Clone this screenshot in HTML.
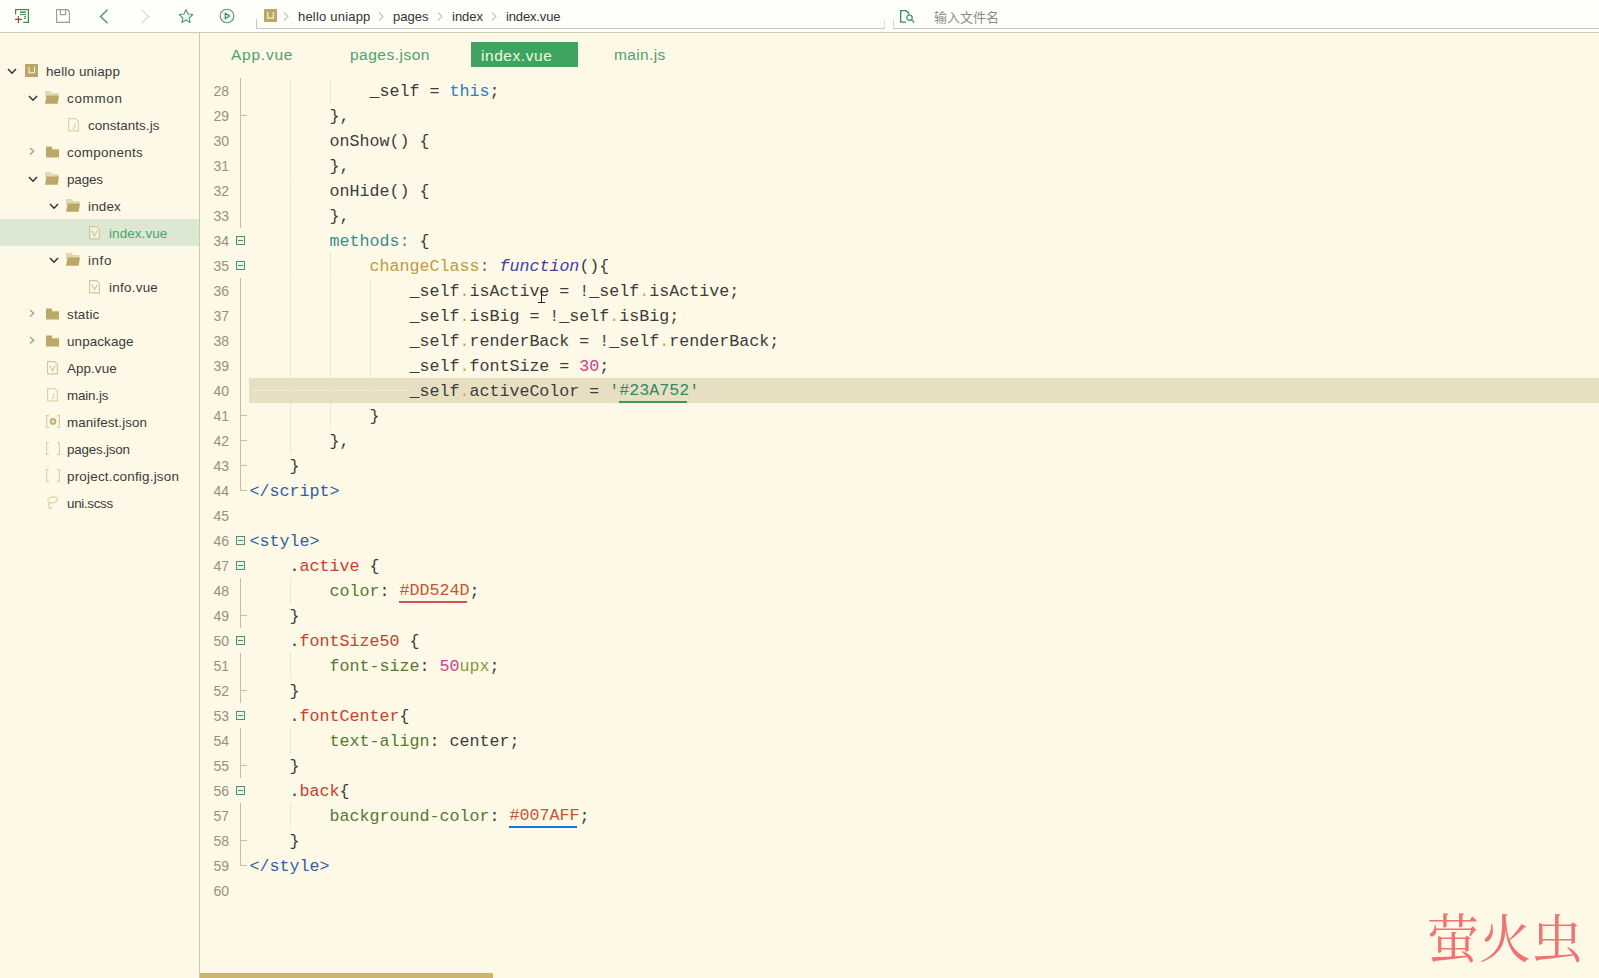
<!DOCTYPE html>
<html lang="zh">
<head>
<meta charset="utf-8">
<title>index.vue - HBuilder X</title>
<style>
*{box-sizing:border-box;margin:0;padding:0}
html,body{width:1599px;height:978px;overflow:hidden;background:#fef8e6}
body{position:relative;font-family:"Liberation Sans","Noto Sans CJK SC",sans-serif;color:#3b3b3b}
#tb{position:absolute;left:0;top:0;width:1599px;height:33px;background:#fefefa;border-bottom:1px solid #d3ccaa}
#tb svg{position:absolute}
#bc{position:absolute;left:256px;top:19px;width:629px;height:10px;border-left:1px solid #cac9c0;border-bottom:1px solid #cac9c0;border-right:1px solid #e4e0d0}
#bc2{position:absolute;left:893px;top:19px;width:706px;height:10px;border-left:1px solid #dcd8c8;border-bottom:1px solid #cac9c0}
.bt{position:absolute;top:8px;font-size:13px;line-height:17px;color:#333;white-space:nowrap}
.bs{position:absolute;top:12px}
#ph{position:absolute;left:934px;top:9px;font-size:13px;line-height:17px;color:#8c8c8c;white-space:nowrap}
#side{position:absolute;left:0;top:33px;width:200px;height:945px;background:#fef8e6;border-right:1px solid #cfc8ae}
.row{position:absolute;left:0;width:199px;height:27px}
.row.sel{background:#dce8d3}
.row.sel .lb{color:#4aa267}
.row .lb{position:absolute;top:5px;font-size:13.4px;line-height:19px;color:#3b3b3b;white-space:nowrap}
.row .ic{position:absolute;top:7px}
.row .ar{position:absolute;top:10.5px}
.row .ar.r{top:9px}
#ed{position:absolute;left:200px;top:33px;width:1399px;height:945px;background:#fef8e6}
.tab{position:absolute;top:42px;height:25px;font-size:15.5px;line-height:25px;color:#4fa06f;white-space:nowrap}
.tab.on{background:#3fa461;color:#ecfbdc;width:107px;left:471px;padding-left:10px;line-height:27px}
.ln{position:absolute;left:200px;width:1399px;height:25px}
.ln.hl:before{content:"";position:absolute;left:49px;top:0;width:1350px;height:25px;background:#e8dfc3}
.no{position:absolute;left:0;width:29px;top:0;text-align:right;font-size:14px;line-height:26px;color:#989179}
.cd{position:absolute;left:49.5px;top:2px;font-family:"Liberation Mono","DejaVu Sans Mono",monospace;font-size:16.667px;line-height:24px;white-space:pre;color:#3d3d3d}
.g{position:absolute;top:0;width:0;height:25px;border-left:1px dotted #ddd7c4}
.fb{position:absolute;left:36px;top:8px;width:9px;height:9px;border:1px solid #5a8a6c;background:#e8faee}
.fb:after{content:"";position:absolute;left:1px;top:3px;width:5px;height:1px;background:#4c8a64}
.fl{position:absolute;left:40px;top:0;width:1px;height:25px;background:#c4bea6}
.fl.e:after{content:"";position:absolute;left:1px;top:12px;width:6px;height:1px;background:#c4bea6}
.fl.l{height:13px}
.fl.l:after{content:"";position:absolute;left:1px;top:12px;width:6px;height:1px;background:#c4bea6}
.kw{color:#2b7fc2}.pr{color:#388e8e}.co{color:#4a86b8}.co2{color:#5a6f8f}.fn{color:#c19a3b}
.it{color:#3c40a8;font-style:italic}.dot{color:#c9a93e}.num{color:#c9428a}.q{color:#3f8060}
.c1{color:#2f8a68;background:linear-gradient(#3c9a58,#3c9a58) 0 100%/calc(100% - 2px) 2px no-repeat}
.c2{color:#c8552e;background:linear-gradient(#cf5650,#cf5650) 0 100%/calc(100% - 2px) 2px no-repeat}
.c3{color:#c8552e;background:linear-gradient(#1a76dc,#1a76dc) 0 100%/calc(100% - 2px) 2px no-repeat}
.c1,.c2,.c3{display:inline-block;line-height:21px;height:23px;vertical-align:top}
.tag{color:#2f5fa6}.sel{color:#c6412b}.prop{color:#527a34}.unit{color:#8a983a}
#wm{position:absolute;left:1427px;top:906px;font-family:"Liberation Serif","Noto Serif CJK SC",serif;font-size:52px;line-height:70px;color:#f07373;white-space:nowrap;letter-spacing:0px}
.ws{position:absolute;top:12px;height:1px;width:37px;background:#f3ecd6}
#ib{position:absolute;left:541px;top:291px;width:1px;height:11px;background:#222}
#ib:after{content:"";position:absolute;left:-3px;top:11px;width:7px;height:1px;background:#222}
#sb{position:absolute;left:200px;top:973px;width:293px;height:5px;background:#ceb56c}
</style>
</head>
<body>
<div id="tb">
<svg style="left:15px;top:9px" width="14" height="14" viewBox="0 0 14 14"><path d="M.6 5.600V.6h12.800v12.800H8.200" fill="none" stroke="#3f8a5a" stroke-width="1.200"/><path d="M5 3.200h6" stroke="#3f8a5a" stroke-width="1.500"/><path d="M5 5.600h6M9 7.700h2M9 9.500h2" stroke="#3f8a5a" stroke-width="1"/><path d="M-.2 10.400h7M3.400 7.300v6.600" stroke="#a3403c" stroke-width="1.200"/></svg>
<svg style="left:56px;top:9px" width="14" height="14" viewBox="0 0 14 14"><path d="M.6.600h11l1.800 2.200v10.600H.6z" fill="none" stroke="#9a9a9a" stroke-width="1.100"/><path d="M4.400.600v5h5.200v-5" fill="none" stroke="#9a9a9a" stroke-width="1.100"/></svg>
<svg style="left:99px;top:9px" width="10" height="15" viewBox="0 0 10 15"><path d="M8.500.800L1.500 7.500l7 6.700" fill="none" stroke="#55906c" stroke-width="1.400"/></svg>
<svg style="left:140px;top:9px" width="10" height="15" viewBox="0 0 10 15"><path d="M1.500.800l7 6.700-7 6.700" fill="none" stroke="#dcdcdc" stroke-width="1.400"/></svg>
<svg style="left:178px;top:8px" width="16" height="16" viewBox="0 0 16 16"><path d="M8 1.500l2 4.500 4.800.5-3.600 3.300 1 4.700L8 12.100 3.800 14.500l1-4.700L1.200 6.500 6 6z" fill="#eafaf1" stroke="#5a9570" stroke-width="1.100" stroke-linejoin="round"/></svg>
<svg style="left:219px;top:8px" width="16" height="16" viewBox="0 0 16 16"><circle cx="8" cy="8" r="6.800" fill="#effbf4" stroke="#5a9570" stroke-width="1.100"/><path d="M6.300 5.300v5.400L10.600 8z" fill="none" stroke="#3f8a5a" stroke-width="1.200" stroke-linejoin="round"/></svg>
<div id="bc"></div><div id="bc2"></div>
<svg style="left:264px;top:9px" width="13" height="13" viewBox="0 0 13 13"><rect width="13" height="13" fill="#b9a66b"/><path d="M3.700 3v6.200h5.600V3" fill="none" stroke="#fff3b8" stroke-width="1.200"/></svg>
<svg class="bs" style="left:283px" width="6" height="9" viewBox="0 0 6 9"><path d="M1 .500l4 4-4 4" fill="none" stroke="#c4c4c4" stroke-width="1.100"/></svg>
<span class="bt" style="left:298px;letter-spacing:.2px">hello uniapp</span>
<svg class="bs" style="left:378px" width="6" height="9" viewBox="0 0 6 9"><path d="M1 .500l4 4-4 4" fill="none" stroke="#c4c4c4" stroke-width="1.100"/></svg>
<span class="bt" style="left:393px">pages</span>
<svg class="bs" style="left:437px" width="6" height="9" viewBox="0 0 6 9"><path d="M1 .500l4 4-4 4" fill="none" stroke="#c4c4c4" stroke-width="1.100"/></svg>
<span class="bt" style="left:452px">index</span>
<svg class="bs" style="left:491px" width="6" height="9" viewBox="0 0 6 9"><path d="M1 .500l4 4-4 4" fill="none" stroke="#c4c4c4" stroke-width="1.100"/></svg>
<span class="bt" style="left:506px;letter-spacing:-.15px">index.vue</span>
<svg style="left:900px;top:10px" width="15" height="14" viewBox="0 0 15 14"><path d="M6 12.200H.7V.7h5.500l2.400 2.400v1.700" fill="none" stroke="#2f8f5b" stroke-width="1.300"/><circle cx="9.500" cy="7.700" r="2.700" fill="none" stroke="#2f8f5b" stroke-width="1.200"/><path d="M11.500 9.700l2.800 3" stroke="#2f8f5b" stroke-width="1.200"/></svg>
<span id="ph">输入文件名</span>
</div>
<div id="side">
</div>
<div id="ed"></div>
<div style="position:absolute;left:0;top:0;width:199px;height:978px">
<div class="row" style="top:57px"><svg style="left:7px" class="ar" width="10" height="7" viewBox="0 0 10 7"><path d="M1 1l4 4.200 4-4.200" fill="none" stroke="#333" stroke-width="1.5"/></svg><svg class="ic" style="left:25px;top:7px" width="13" height="13" viewBox="0 0 13 13"><rect width="13" height="13" fill="#b9a668"/><path d="M4 3v5.800h5.500V3" fill="none" stroke="#fff5c4" stroke-width="1.100"/></svg><span class="lb" style="left:46px;letter-spacing:0.15px">hello uniapp</span></div>
<div class="row" style="top:84px"><svg style="left:28px" class="ar" width="10" height="7" viewBox="0 0 10 7"><path d="M1 1l4 4.200 4-4.200" fill="none" stroke="#333" stroke-width="1.5"/></svg><svg class="ic" style="left:45px;top:7px" width="14" height="13" viewBox="0 0 14 13"><path d="M0 0h6l.8 2h6.700v4H0z" fill="#e3d8b4"/><path d="M0 12.800L1.600 4.600H14l-1.300 8.200z" fill="#bba869"/></svg><span class="lb" style="left:67px;letter-spacing:0.72px">common</span></div>
<div class="row" style="top:111px"><svg class="ic" style="left:68px;top:7px" width="11" height="14" viewBox="0 0 11 14"><path d="M.6 .6h7L10.400 3.400v9.500H.6z" fill="#fffbee" fill-opacity=".55" stroke="#ddd1a8" stroke-width="1.200"/><path d="M6.800 5v4q0 1.300-1.300 1.300H4" fill="none" stroke="#ddd1a8" stroke-width="1.100"/></svg><span class="lb" style="left:88px;letter-spacing:0.06px">constants.js</span></div>
<div class="row" style="top:138px"><svg style="left:29px" class="ar r" width="7" height="9" viewBox="0 0 7 9"><path d="M1 1l3.700 3.300L1 7.600" fill="none" stroke="#a89f88" stroke-width="1.300"/></svg><svg class="ic" style="left:46px;top:8px" width="13" height="12" viewBox="0 0 13 12"><path d="M0 .500h6v2.500h7v8.500H0z" fill="#bba869"/><path d="M6.300 3.400H13" stroke="#dccf9f" stroke-width=".8"/></svg><span class="lb" style="left:67px;letter-spacing:0.30px">components</span></div>
<div class="row" style="top:165px"><svg style="left:28px" class="ar" width="10" height="7" viewBox="0 0 10 7"><path d="M1 1l4 4.200 4-4.200" fill="none" stroke="#333" stroke-width="1.5"/></svg><svg class="ic" style="left:45px;top:7px" width="14" height="13" viewBox="0 0 14 13"><path d="M0 0h6l.8 2h6.700v4H0z" fill="#e3d8b4"/><path d="M0 12.800L1.600 4.600H14l-1.300 8.200z" fill="#bba869"/></svg><span class="lb" style="left:67px;letter-spacing:-0.11px">pages</span></div>
<div class="row" style="top:192px"><svg style="left:49px" class="ar" width="10" height="7" viewBox="0 0 10 7"><path d="M1 1l4 4.200 4-4.200" fill="none" stroke="#333" stroke-width="1.5"/></svg><svg class="ic" style="left:66px;top:7px" width="14" height="13" viewBox="0 0 14 13"><path d="M0 0h6l.8 2h6.700v4H0z" fill="#e3d8b4"/><path d="M0 12.800L1.600 4.600H14l-1.300 8.200z" fill="#bba869"/></svg><span class="lb" style="left:88px;letter-spacing:0.20px">index</span></div>
<div class="row sel" style="top:219px"><svg class="ic" style="left:89px;top:7px" width="11" height="14" viewBox="0 0 11 14"><path d="M.6 .6h7L10.400 3.400v9.500H.6z" fill="#fffbee" fill-opacity=".55" stroke="#d3c595" stroke-width="1.200"/><path d="M2.800 4.500l2.700 5.500 2.700-5.500" fill="none" stroke="#d3c595" stroke-width="1.100"/></svg><span class="lb" style="left:109px;letter-spacing:0.12px">index.vue</span></div>
<div class="row" style="top:246px"><svg style="left:49px" class="ar" width="10" height="7" viewBox="0 0 10 7"><path d="M1 1l4 4.200 4-4.200" fill="none" stroke="#333" stroke-width="1.5"/></svg><svg class="ic" style="left:66px;top:7px" width="14" height="13" viewBox="0 0 14 13"><path d="M0 0h6l.8 2h6.700v4H0z" fill="#e3d8b4"/><path d="M0 12.800L1.600 4.600H14l-1.300 8.200z" fill="#bba869"/></svg><span class="lb" style="left:88px;letter-spacing:0.60px">info</span></div>
<div class="row" style="top:273px"><svg class="ic" style="left:89px;top:7px" width="11" height="14" viewBox="0 0 11 14"><path d="M.6 .6h7L10.400 3.400v9.500H.6z" fill="#fffbee" fill-opacity=".55" stroke="#d3c595" stroke-width="1.200"/><path d="M2.800 4.500l2.700 5.500 2.700-5.500" fill="none" stroke="#d3c595" stroke-width="1.100"/></svg><span class="lb" style="left:109px;letter-spacing:0.27px">info.vue</span></div>
<div class="row" style="top:300px"><svg style="left:29px" class="ar r" width="7" height="9" viewBox="0 0 7 9"><path d="M1 1l3.700 3.300L1 7.600" fill="none" stroke="#a89f88" stroke-width="1.300"/></svg><svg class="ic" style="left:46px;top:8px" width="13" height="12" viewBox="0 0 13 12"><path d="M0 .500h6v2.500h7v8.500H0z" fill="#bba869"/><path d="M6.300 3.400H13" stroke="#dccf9f" stroke-width=".8"/></svg><span class="lb" style="left:67px;letter-spacing:0.20px">static</span></div>
<div class="row" style="top:327px"><svg style="left:29px" class="ar r" width="7" height="9" viewBox="0 0 7 9"><path d="M1 1l3.700 3.300L1 7.600" fill="none" stroke="#a89f88" stroke-width="1.300"/></svg><svg class="ic" style="left:46px;top:8px" width="13" height="12" viewBox="0 0 13 12"><path d="M0 .500h6v2.500h7v8.500H0z" fill="#bba869"/><path d="M6.300 3.400H13" stroke="#dccf9f" stroke-width=".8"/></svg><span class="lb" style="left:67px;letter-spacing:0.12px">unpackage</span></div>
<div class="row" style="top:354px"><svg class="ic" style="left:47px;top:7px" width="11" height="14" viewBox="0 0 11 14"><path d="M.6 .6h7L10.400 3.400v9.500H.6z" fill="#fffbee" fill-opacity=".55" stroke="#d3c595" stroke-width="1.200"/><path d="M2.800 4.500l2.700 5.500 2.700-5.500" fill="none" stroke="#d3c595" stroke-width="1.100"/></svg><span class="lb" style="left:67px;letter-spacing:0.08px">App.vue</span></div>
<div class="row" style="top:381px"><svg class="ic" style="left:47px;top:7px" width="11" height="14" viewBox="0 0 11 14"><path d="M.6 .6h7L10.400 3.400v9.500H.6z" fill="#fffbee" fill-opacity=".55" stroke="#ddd1a8" stroke-width="1.200"/><path d="M6.800 5v4q0 1.300-1.300 1.300H4" fill="none" stroke="#ddd1a8" stroke-width="1.100"/></svg><span class="lb" style="left:67px;letter-spacing:-0.17px">main.js</span></div>
<div class="row" style="top:408px"><svg class="ic" style="left:46px;top:7px" width="14" height="13" viewBox="0 0 14 13"><path d="M3 .600H.6v11.800H3M11 .600h2.400v11.800H11" fill="none" stroke="#d9cda3" stroke-width="1.200"/><circle cx="7" cy="6.500" r="2.300" fill="#fff8e0" stroke="#c4b274" stroke-width="2.200"/></svg><span class="lb" style="left:67px;letter-spacing:0.09px">manifest.json</span></div>
<div class="row" style="top:435px"><svg class="ic" style="left:46px;top:7px" width="14" height="13" viewBox="0 0 14 13"><path d="M3 .600H.6v11.800H3M11 .600h2.400v11.800H11" fill="none" stroke="#ddd2ab" stroke-width="1.200"/></svg><span class="lb" style="left:67px;letter-spacing:-0.20px">pages.json</span></div>
<div class="row" style="top:462px"><svg class="ic" style="left:46px;top:7px" width="14" height="13" viewBox="0 0 14 13"><path d="M3 .600H.6v11.800H3M11 .600h2.400v11.800H11" fill="none" stroke="#ddd2ab" stroke-width="1.200"/></svg><span class="lb" style="left:67px;letter-spacing:0.22px">project.config.json</span></div>
<div class="row" style="top:489px"><svg class="ic" style="left:46px;top:7px" width="13" height="14" viewBox="0 0 13 14"><path d="M5.200 7.200C1.500 7.400.6 4 3.800 2S12 .8 11.500 3.400 7.800 7 5.200 7.200C3.200 7.600 2 9.300 2.600 11.200s3.400 1.300 2.600-.8" fill="none" stroke="#ddd2ab" stroke-width="1.200"/></svg><span class="lb" style="left:67px;letter-spacing:-0.32px">uni.scss</span></div>
</div>
<span class="tab" style="left:231px;letter-spacing:.75px">App.vue</span>
<span class="tab" style="left:350px;letter-spacing:.5px">pages.json</span>
<span class="tab on" style="letter-spacing:.55px">index.vue</span>
<span class="tab" style="left:614px;letter-spacing:.35px">main.js</span>
<div class="ln" style="top:78px"><span class="no">28</span><i class="fl v"></i><i class="g" style="left:90px"></i><i class="g" style="left:130px"></i><span class="cd">            _self = <span class="kw">this</span>;</span></div>
<div class="ln" style="top:103px"><span class="no">29</span><i class="fl e"></i><i class="g" style="left:90px"></i><span class="cd">        },</span></div>
<div class="ln" style="top:128px"><span class="no">30</span><i class="fl v"></i><i class="g" style="left:90px"></i><span class="cd">        onShow() {</span></div>
<div class="ln" style="top:153px"><span class="no">31</span><i class="fl v"></i><i class="g" style="left:90px"></i><span class="cd">        },</span></div>
<div class="ln" style="top:178px"><span class="no">32</span><i class="fl v"></i><i class="g" style="left:90px"></i><span class="cd">        onHide() {</span></div>
<div class="ln" style="top:203px"><span class="no">33</span><i class="fl v"></i><i class="g" style="left:90px"></i><span class="cd">        },</span></div>
<div class="ln" style="top:228px"><span class="no">34</span><i class="fb"></i><i class="g" style="left:90px"></i><span class="cd">        <span class="pr">methods</span><span class="co">:</span> {</span></div>
<div class="ln" style="top:253px"><span class="no">35</span><i class="fb"></i><i class="g" style="left:90px"></i><i class="g" style="left:130px"></i><span class="cd">            <span class="fn">changeClass</span><span class="co2">:</span> <span class="it">function</span>(){</span></div>
<div class="ln" style="top:278px"><span class="no">36</span><i class="fl v"></i><i class="g" style="left:90px"></i><i class="g" style="left:130px"></i><i class="g" style="left:170px"></i><span class="cd">                _self<span class="dot">.</span>isActive = !_self<span class="dot">.</span>isActive;</span></div>
<div class="ln" style="top:303px"><span class="no">37</span><i class="fl v"></i><i class="g" style="left:90px"></i><i class="g" style="left:130px"></i><i class="g" style="left:170px"></i><span class="cd">                _self<span class="dot">.</span>isBig = !_self<span class="dot">.</span>isBig;</span></div>
<div class="ln" style="top:328px"><span class="no">38</span><i class="fl v"></i><i class="g" style="left:90px"></i><i class="g" style="left:130px"></i><i class="g" style="left:170px"></i><span class="cd">                _self<span class="dot">.</span>renderBack = !_self<span class="dot">.</span>renderBack;</span></div>
<div class="ln" style="top:353px"><span class="no">39</span><i class="fl v"></i><i class="g" style="left:90px"></i><i class="g" style="left:130px"></i><i class="g" style="left:170px"></i><span class="cd">                _self<span class="dot">.</span>fontSize = <span class="num">30</span>;</span></div>
<div class="ln hl" style="top:378px"><span class="no">40</span><i class="fl v"></i><i class="ws" style="left:52px"></i><i class="ws" style="left:92px"></i><i class="ws" style="left:132px"></i><i class="ws" style="left:172px"></i><span class="cd">                _self<span class="dot">.</span>activeColor = <span class="q">'</span><span class="c1">#23A752</span><span class="q">'</span></span></div>
<div class="ln" style="top:403px"><span class="no">41</span><i class="fl e"></i><i class="g" style="left:90px"></i><i class="g" style="left:130px"></i><span class="cd">            }</span></div>
<div class="ln" style="top:428px"><span class="no">42</span><i class="fl e"></i><i class="g" style="left:90px"></i><span class="cd">        },</span></div>
<div class="ln" style="top:453px"><span class="no">43</span><i class="fl e"></i><span class="cd">    }</span></div>
<div class="ln" style="top:478px"><span class="no">44</span><i class="fl l"></i><span class="cd"><span class="tag">&lt;/script&gt;</span></span></div>
<div class="ln" style="top:503px"><span class="no">45</span><span class="cd"></span></div>
<div class="ln" style="top:528px"><span class="no">46</span><i class="fb"></i><span class="cd"><span class="tag">&lt;style&gt;</span></span></div>
<div class="ln" style="top:553px"><span class="no">47</span><i class="fb"></i><span class="cd">    .<span class="sel">active</span> {</span></div>
<div class="ln" style="top:578px"><span class="no">48</span><i class="fl v"></i><i class="g" style="left:90px"></i><span class="cd">        <span class="prop">color</span>: <span class="c2">#DD524D</span>;</span></div>
<div class="ln" style="top:603px"><span class="no">49</span><i class="fl e"></i><span class="cd">    }</span></div>
<div class="ln" style="top:628px"><span class="no">50</span><i class="fb"></i><span class="cd">    .<span class="sel">fontSize50</span> {</span></div>
<div class="ln" style="top:653px"><span class="no">51</span><i class="fl v"></i><i class="g" style="left:90px"></i><span class="cd">        <span class="prop">font-size</span>: <span class="num">50</span><span class="unit">upx</span>;</span></div>
<div class="ln" style="top:678px"><span class="no">52</span><i class="fl e"></i><span class="cd">    }</span></div>
<div class="ln" style="top:703px"><span class="no">53</span><i class="fb"></i><span class="cd">    .<span class="sel">fontCenter</span>{</span></div>
<div class="ln" style="top:728px"><span class="no">54</span><i class="fl v"></i><i class="g" style="left:90px"></i><span class="cd">        <span class="prop">text-align</span>: center;</span></div>
<div class="ln" style="top:753px"><span class="no">55</span><i class="fl e"></i><span class="cd">    }</span></div>
<div class="ln" style="top:778px"><span class="no">56</span><i class="fb"></i><span class="cd">    .<span class="sel">back</span>{</span></div>
<div class="ln" style="top:803px"><span class="no">57</span><i class="fl v"></i><i class="g" style="left:90px"></i><span class="cd">        <span class="prop">background-color</span>: <span class="c3">#007AFF</span>;</span></div>
<div class="ln" style="top:828px"><span class="no">58</span><i class="fl e"></i><span class="cd">    }</span></div>
<div class="ln" style="top:853px"><span class="no">59</span><i class="fl l"></i><span class="cd"><span class="tag">&lt;/style&gt;</span></span></div>
<div class="ln" style="top:878px"><span class="no">60</span><span class="cd"></span></div>
<div id="wm">萤火虫</div>
<div id="ib"></div>
<div id="sb"></div>
</body>
</html>
